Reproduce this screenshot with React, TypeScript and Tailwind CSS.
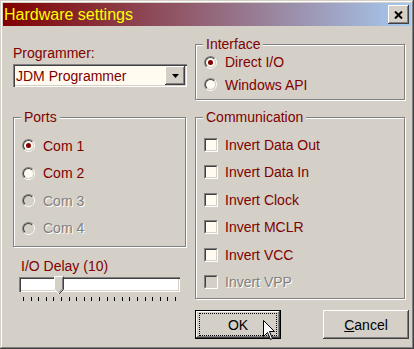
const raised =
  'shadow-[inset_-1px_-1px_#404040,inset_1px_1px_#ffffff,inset_-2px_-2px_#808080,inset_2px_2px_#d4d0c8]';
const sunken =
  'shadow-[inset_1px_1px_#808080,inset_2px_2px_#404040,inset_-1px_-1px_#ffffff,inset_-2px_-2px_#d4d0c8]';

function Group({ title, className, children }: { title: string; className: string; children?: React.ReactNode }) {
  return (
    <div className={`relative border border-[#808080] shadow-[inset_1px_1px_#ffffff,1px_1px_#ffffff] ${className}`}>
      <span className="absolute left-[7px] top-[-9px] bg-[#d4d0c8] px-[3px] leading-[16px] text-[#800000]">
        {title}
      </span>
      {children}
    </div>
  );
}

function Label({ text, disabled }: { text: string; disabled?: boolean }) {
  return (
    <span
      className={
        disabled ? 'text-[#808080] [text-shadow:1px_1px_0_#ffffff]' : 'text-[#800000]'
      }
    >
      {text}
    </span>
  );
}

function Radio({
  label,
  checked = false,
  disabled = false,
  row = 'h-[27.5px]',
}: {
  label: string;
  checked?: boolean;
  disabled?: boolean;
  row?: string;
}) {
  return (
    <div className={`flex items-center gap-[8px] ${row}`}>
      <span className="flex h-[13px] w-[13px] shrink-0 rounded-full border border-t-[#808080] border-l-[#808080] border-r-white border-b-white">
        <span
          className={`flex h-full w-full items-center justify-center rounded-full border border-t-[#404040] border-l-[#404040] border-r-[#d4d0c8] border-b-[#d4d0c8] ${
            disabled ? 'bg-[#d4d0c8]' : 'bg-[#fffbf0]'
          }`}
        >
          {checked && <span className="h-[5px] w-[5px] rounded-full bg-[#800000]" />}
        </span>
      </span>
      <Label text={label} disabled={disabled} />
    </div>
  );
}

function Check({ label, disabled = false }: { label: string; disabled?: boolean }) {
  return (
    <div className="flex h-[27.5px] items-center gap-[7px]">
      <span className="flex h-[14px] w-[14px] shrink-0 border border-t-[#808080] border-l-[#808080] border-r-white border-b-white">
        <span
          className={`block h-full w-full border border-t-[#404040] border-l-[#404040] border-r-[#d4d0c8] border-b-[#d4d0c8] ${
            disabled ? 'bg-[#d4d0c8]' : 'bg-[#fffbf0]'
          }`}
        />
      </span>
      <Label text={label} disabled={disabled} />
    </div>
  );
}

const ticks = Array.from({ length: 21 }, (_, i) => i);

export default function App() {
  return (
    <div
      className={`relative h-[349px] w-[414px] overflow-hidden bg-[#d4d0c8] p-[3px] font-['Liberation_Sans',Arial,sans-serif] text-[14px] leading-[16px] shadow-[inset_-1px_-1px_#404040,inset_1px_1px_#d4d0c8,inset_-2px_-2px_#808080,inset_2px_2px_#ffffff]`}
    >
      {/* title bar */}
      <div className="flex h-[23px] items-center justify-between bg-[linear-gradient(to_right,#800000,#a6caf0)] pr-[2px]">
        <span className="pl-[1px] text-[16px] leading-[23px] text-[#ffff00]">Hardware settings</span>
        <span className={`flex h-[19px] w-[21px] items-center justify-center bg-[#d4d0c8] ${raised}`}>
          <svg width="9" height="8" viewBox="0 0 9 8">
            <path d="M1 0.5 L8 7.5 M8 0.5 L1 7.5" stroke="#000" strokeWidth="2" />
          </svg>
        </span>
      </div>

      <div className="flex gap-[8px] pl-[10px]">
        {/* left column */}
        <div className="flex w-[174px] flex-col">
          <span className="mt-[19px] text-[#800000]">Programmer:</span>
          <div className={`mt-[3px] flex h-[23px] w-[174px] items-center bg-[#fffbf0] p-[2px] ${sunken}`}>
            <span className="flex-1 pl-[1px] text-[#800000]">JDM Programmer</span>
            <span className={`flex h-[19px] w-[20px] items-center justify-center bg-[#d4d0c8] ${raised}`}>
              <svg width="7" height="4" viewBox="0 0 7 4">
                <path d="M0 0 H7 L3.5 4 Z" fill="#000" />
              </svg>
            </span>
          </div>

          <Group title="Ports" className="mt-[30px] h-[130px] w-[173px] pl-[8px] pt-[14px]">
            <Radio label="Com 1" checked />
            <Radio label="Com 2" />
            <Radio label="Com 3" disabled />
            <Radio label="Com 4" disabled />
          </Group>

          <span className="ml-[8px] mt-[11px] text-[#800000]">I/O Delay (10)</span>
          <div className={`relative ml-[6px] mt-[3px] h-[15px] w-[161px] bg-white ${sunken}`}>
            <svg className="absolute left-[35px] top-[-1px]" width="10" height="19" viewBox="0 0 10 19">
              <path d="M0.5 0.5 H9.5 V13.5 L5 18 L0.5 13.5 Z" fill="#d4d0c8" />
              <path d="M0.5 13.5 V0.5 H9.5" stroke="#ffffff" fill="none" />
              <path d="M0.5 13.5 L5 18" stroke="#ffffff" fill="none" />
              <path d="M9.5 0.5 V13.5 L5 18" stroke="#404040" fill="none" />
              <path d="M8.5 1.5 V13 L5 16.5" stroke="#808080" fill="none" />
            </svg>
          </div>
          <div className="ml-[10px] mt-[5px] flex w-[153px] justify-between">
            {ticks.map((t) => (
              <span key={t} className="h-[4px] w-[1px] bg-black" />
            ))}
          </div>
        </div>

        {/* right column */}
        <div className="flex w-[214px] flex-col">
          <Group title="Interface" className="mt-[18px] h-[56px] w-[210px] pl-[8px] pt-[6px]">
            <Radio label="Direct I/O" checked row="h-[22.5px]" />
            <Radio label="Windows API" row="h-[22.5px]" />
          </Group>

          <Group title="Communication" className="mt-[17px] h-[182px] w-[210px] pl-[8px] pt-[13px]">
            <Check label="Invert Data Out" />
            <Check label="Invert Data In" />
            <Check label="Invert Clock" />
            <Check label="Invert MCLR" />
            <Check label="Invert VCC" />
            <Check label="Invert VPP" disabled />
          </Group>

          <div className="mt-[11px] flex w-[214px] justify-between">
            <div className="flex h-[29px] w-[86px] border border-black bg-[#d4d0c8]">
              <div className={`flex flex-1 px-[3px] py-[2px] ${raised}`}>
                <div className="flex flex-1 items-center justify-center border border-dotted border-black text-black">
                  OK
                </div>
              </div>
            </div>
            <div className={`flex h-[29px] w-[86px] items-center justify-center bg-[#d4d0c8] text-black ${raised}`}>
              <span>
                <span className="underline">C</span>ancel
              </span>
            </div>
          </div>
        </div>
      </div>

      {/* mouse pointer */}
      <svg className="absolute left-[263px] top-[320px]" width="13" height="21" viewBox="0 0 13 21">
        <path
          d="M0.5 0.5 L0.5 16.5 L4.5 12.5 L7.5 19.5 L9.5 18.5 L6.5 11.5 L11.5 11.5 Z"
          fill="#ffffff"
          stroke="#000000"
        />
      </svg>
    </div>
  );
}
